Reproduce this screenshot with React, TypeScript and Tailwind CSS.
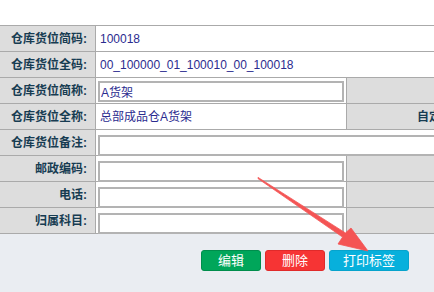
import React from 'react';

const font = { fontFamily: '"Liberation Sans", "Noto Sans CJK SC", sans-serif' };

function Label({ text }: { text: string }) {
  return (
    <div className="bg-[#dddddd] h-[25px] flex items-center justify-end pr-[8px] text-[12px] font-bold text-[#173c52]">
      {text}
    </div>
  );
}

function Value({ text, span = 'col-span-3' }: { text: string; span?: string }) {
  return <div className={`${span} bg-white h-[25px] flex items-center pl-[4px] text-[12px] text-[#2b2b8f]`}>{text}</div>;
}

function Field({ value = '', span = '' }: { value?: string; span?: string }) {
  return (
    <div className={`${span} bg-white h-[25px] pl-[2px] pr-[2px] pt-[2px]`}>
      <input
        readOnly
        value={value}
        className="w-full h-[21px] border-2 border-[#b3b3b3] bg-white px-[1px] text-[12px] text-[#2b2b8f] outline-none"
        style={font}
      />
    </div>
  );
}

function Gray({ text = '', span = 'col-span-2' }: { text?: string; span?: string }) {
  return (
    <div className={`${span} bg-[#dddddd] h-[25px] flex items-center pl-[70px] text-[12px] font-bold text-[#173c52] whitespace-nowrap`}>
      {text}
    </div>
  );
}

export default function App() {
  return (
    <div className="relative w-[434px] h-[292px] overflow-hidden bg-white flex flex-col" style={font}>
      <div className="h-[25px] shrink-0 bg-white" />
      <div className="w-[702px] shrink-0 grid grid-cols-[95px_250px_154px_200px] gap-px bg-[#aaaaaa] border-y border-[#aaaaaa]">
        <Label text="仓库货位简码:" />
        <Value text="100018" />

        <Label text="仓库货位全码:" />
        <Value text="00_100000_01_100010_00_100018" />

        <Label text="仓库货位简称:" />
        <Field value="A货架" />
        <Gray />

        <Label text="仓库货位全称:" />
        <Value text="总部成品仓A货架" span="" />
        <Gray text="自定义名称:" span="" />
        <div className="bg-white h-[25px]" />

        <Label text="仓库货位备注:" />
        <Field span="col-span-3" />

        <Label text="邮政编码:" />
        <Field />
        <Gray />

        <Label text="电话:" />
        <Field />
        <Gray />

        <Label text="归属科目:" />
        <Field />
        <Gray />
      </div>
      <div className="flex-1 bg-[#eaedf2] pt-[16px] pl-[201px]">
        <div className="flex gap-[4px] text-[13px] text-white">
          <button className="w-[60px] h-[21px] rounded-[3px] bg-[#00a65a] border border-[#008d4c] flex items-center justify-center">
            编辑
          </button>
          <button className="w-[60px] h-[21px] rounded-[3px] bg-[#f63434] border border-[#e02a2a] flex items-center justify-center">
            删除
          </button>
          <button className="w-[80px] h-[21px] rounded-[3px] bg-[#07b0dc] border border-[#06a3cc] flex items-center justify-center">
            打印标签
          </button>
        </div>
      </div>
      <svg className="absolute left-0 top-0" width="434" height="292" viewBox="0 0 434 292">
        <polygon
          points="258,177.4 345.4,232.9 351,228 368,251 338,244 342.6,237.1 258,178.6"
          fill="#f45454"
          stroke="#f45454"
          strokeWidth="0.8"
          strokeLinejoin="round"
        />
      </svg>
    </div>
  );
}
